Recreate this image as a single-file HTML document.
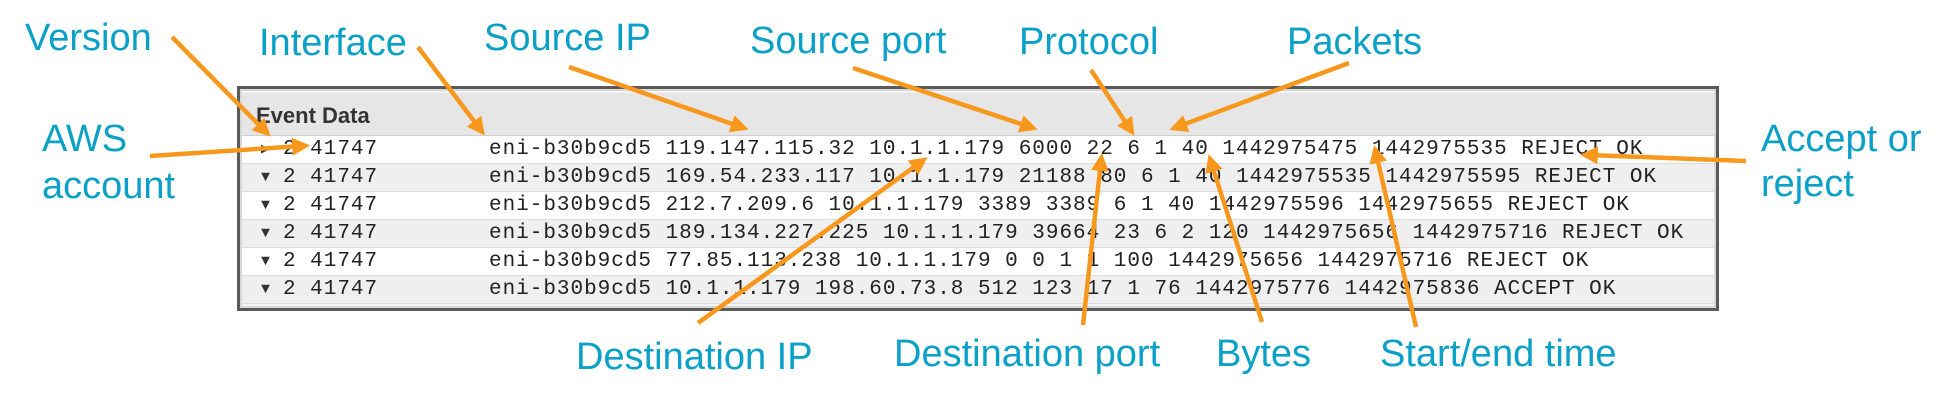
<!DOCTYPE html>
<html><head><meta charset="utf-8"><style>
body{margin:0;width:1959px;height:403px;background:#fff;position:relative;overflow:hidden;font-family:"Liberation Sans",Arial,sans-serif}
.lb{position:absolute;color:#0aa0c8;font-size:38px;line-height:1;white-space:nowrap}
.box{position:absolute;left:237px;top:86px;width:1476px;height:219px;border:3px solid #5a5a5a;background:#f4f4f4;box-shadow:inset 0 0 0 2px #d8d8d8;overflow:hidden}
.hdr{position:absolute;left:2px;right:2px;top:4px;height:42px;background:#e6e6e6;border-bottom:1px solid #cfcfcf}
.hdr span{position:absolute;left:14px;top:10px;font-weight:bold;font-size:22px;color:#333}
.row{position:absolute;left:2px;right:2px;height:27px;border-bottom:1px solid #dcdcdc;font-family:"Liberation Mono",monospace;font-size:21px;color:#222;letter-spacing:0.98px;line-height:27px;white-space:pre}
.row .a{position:absolute;left:19px;top:0;font-size:15px;letter-spacing:0;color:#333}
.row .b{position:absolute;left:41px}
.row .c{position:absolute;left:247px}
</style></head><body>
<div class="box">
<div class="hdr"><span>Event Data</span></div>
<div class="row" style="top:47px;background:#fff"><span class="a">▶</span><span class="b">2 41747</span><span class="c">eni-b30b9cd5 119.147.115.32 10.1.1.179 6000 22 6 1 40 1442975475 1442975535 REJECT OK</span></div>
<div class="row" style="top:75px;background:#efefef"><span class="a">▼</span><span class="b">2 41747</span><span class="c">eni-b30b9cd5 169.54.233.117 10.1.1.179 21188 80 6 1 40 1442975535 1442975595 REJECT OK</span></div>
<div class="row" style="top:103px;background:#fff"><span class="a">▼</span><span class="b">2 41747</span><span class="c">eni-b30b9cd5 212.7.209.6 10.1.1.179 3389 3389 6 1 40 1442975596 1442975655 REJECT OK</span></div>
<div class="row" style="top:131px;background:#efefef"><span class="a">▼</span><span class="b">2 41747</span><span class="c">eni-b30b9cd5 189.134.227.225 10.1.1.179 39664 23 6 2 120 1442975656 1442975716 REJECT OK</span></div>
<div class="row" style="top:159px;background:#fff"><span class="a">▼</span><span class="b">2 41747</span><span class="c">eni-b30b9cd5 77.85.113.238 10.1.1.179 0 0 1 1 100 1442975656 1442975716 REJECT OK</span></div>
<div class="row" style="top:187px;background:#efefef"><span class="a">▼</span><span class="b">2 41747</span><span class="c">eni-b30b9cd5 10.1.1.179 198.60.73.8 512 123 17 1 76 1442975776 1442975836 ACCEPT OK</span></div>
</div>

<div class="lb" style="left:25px;top:19px">Version</div>
<div class="lb" style="left:259px;top:24px">Interface</div>
<div class="lb" style="left:484px;top:19px">Source IP</div>
<div class="lb" style="left:750px;top:22px">Source port</div>
<div class="lb" style="left:1019px;top:23px">Protocol</div>
<div class="lb" style="left:1287px;top:23px">Packets</div>
<div class="lb" style="left:42px;top:120px">AWS</div>
<div class="lb" style="left:42px;top:167px">account</div>
<div class="lb" style="left:1761px;top:120px">Accept or</div>
<div class="lb" style="left:1761px;top:165px">reject</div>
<div class="lb" style="left:576px;top:338px">Destination IP</div>
<div class="lb" style="left:894px;top:335px">Destination port</div>
<div class="lb" style="left:1216px;top:335px">Bytes</div>
<div class="lb" style="left:1380px;top:335px">Start/end time</div>

<svg width="1959" height="403" style="position:absolute;left:0;top:0">
<defs><marker id="m" markerWidth="4" markerHeight="4" refX="2.2" refY="2" orient="auto" markerUnits="strokeWidth"><path d="M0,0 L4,2 L0,4 z" fill="#f7981d"/></marker></defs>
<g stroke="#f7981d" stroke-width="4.5" marker-end="url(#m)" fill="none">
<line x1="172" y1="37" x2="265" y2="131"/>
<line x1="418" y1="47" x2="480" y2="129"/>
<line x1="569" y1="67" x2="741" y2="127"/>
<line x1="853" y1="68" x2="1030" y2="127"/>
<line x1="1091" y1="70" x2="1130" y2="129"/>
<line x1="1349" y1="63" x2="1177" y2="127"/>
<line x1="150" y1="156" x2="302" y2="146"/>
<line x1="1746" y1="161" x2="1588" y2="155"/>
<line x1="698" y1="323" x2="921" y2="162"/>
<line x1="1083" y1="325" x2="1101" y2="161"/>
<line x1="1262" y1="322" x2="1211" y2="162"/>
<line x1="1416" y1="327" x2="1376" y2="153"/>
</g>
</svg>
</body></html>
